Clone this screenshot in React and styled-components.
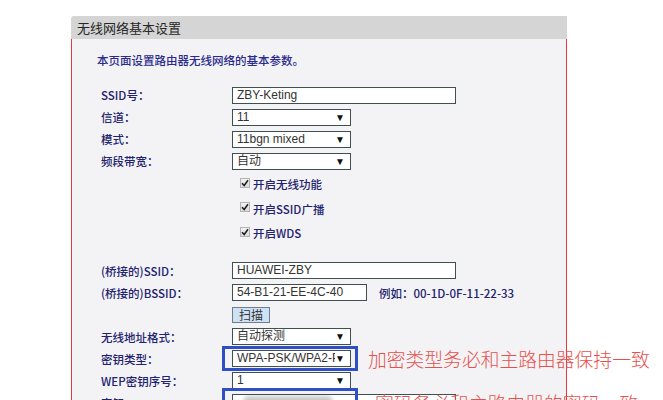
import React from "react";
import styled, { createGlobalStyle } from "styled-components";

const Global = createGlobalStyle`
  html, body { margin: 0; padding: 0; background: #ffffff; overflow: hidden; }
  body { font-family: "Noto Sans CJK SC", "Noto Sans", sans-serif; }
`;

const Page = styled.div`
  padding: 16px 0 0 71px;
  width: 496px;
`;

const Header = styled.div`
  height: 23px;
  line-height: 23px;
  background: #d5d5d5;
  border-radius: 3px 0 0 0;
  padding-left: 6px;
  font-size: 13px;
  color: #262626;
`;

const Body = styled.div`
  background: #f3f3f5;
  border-left: 1px solid #e23a3a;
  border-right: 1px solid #e23a3a;
  padding: 13px 0 20px 25px;
`;

const Desc = styled.div`
  font-size: 11.5px;
  line-height: 16px;
  color: #2a2a8c;
  font-weight: 500;
  margin-bottom: 16px;
`;

const Form = styled.div`
  display: flex;
  flex-direction: column;
  padding-left: 4px;
`;

const Row = styled.div`
  display: flex;
  align-items: center;
  height: ${(p) => p.$h || 22}px;
  margin-top: ${(p) => p.$mt || 0}px;
`;

const Label = styled.div`
  width: 131px;
  flex: none;
  font-size: 11.5px;
  font-weight: 500;
  color: #22226e;
  white-space: nowrap;
`;

const Cell = styled.div`
  position: relative;
  display: flex;
  align-items: center;
  padding-left: ${(p) => p.$pl || 0}px;
`;

const TextBox = styled.div`
  box-sizing: border-box;
  width: ${(p) => p.$w}px;
  height: 17px;
  border: 1px solid #3f5050;
  background: #ffffff;
  font-family: "Liberation Sans", Arial, "Noto Sans CJK SC", sans-serif;
  font-size: 12px;
  line-height: 15px;
  color: #333333;
  padding-left: 4px;
  white-space: nowrap;
  overflow: hidden;
  position: relative;
`;

const Select = styled(TextBox)`
  width: 119px;
  display: flex;
  justify-content: space-between;
  padding-right: 5px;
`;

const Arrow = styled.span`
  font-size: 10px;
  color: #111;
  line-height: 15px;
`;

const SelText = styled.span`
  overflow: hidden;
  white-space: nowrap;
  max-width: 100px;
`;

const CheckRow = styled.div`
  display: flex;
  align-items: center;
  gap: 3px;
  font-size: 11.5px;
  font-weight: 500;
  color: #22226e;
`;

const Box = styled.span`
  box-sizing: border-box;
  width: 10px;
  height: 10px;
  border: 1px solid #b4b4b4;
  background: linear-gradient(#f2f2f2, #dadada);
  display: inline-flex;
  align-items: center;
  justify-content: center;
  margin-top: -3px;
`;

const Example = styled.span`
  margin-left: 12px;
  font-size: 11.5px;
  font-weight: 500;
  color: #22226e;
`;

const ScanButton = styled.div`
  box-sizing: border-box;
  width: 38px;
  height: 16px;
  background: #cfe2f3;
  border: 1px solid #6e7e8e;
  font-size: 12px;
  line-height: 14px;
  color: #333;
  text-align: center;
`;

const Highlight = styled.div`
  position: absolute;
  left: -10px;
  width: 136px;
  top: ${(p) => p.$top}px;
  bottom: ${(p) => p.$bottom}px;
  border: 3px solid #2f4fc2;
  box-sizing: border-box;
  pointer-events: none;
`;

const Note = styled.span`
  margin-left: 17px;
  font-size: 18.8px;
  line-height: 20px;
  color: #e8504c;
  white-space: nowrap;
  font-weight: 300;
`;

const NoteOver = styled(Note)`
  position: absolute;
  left: 143px;
  top: -1px;
  margin-left: 0;
`;

const Blur = styled.span`
  position: absolute;
  left: 10px;
  top: 1px;
  width: 90px;
  height: 12px;
  border-radius: 6px;
  background: #c9c9c9;
  filter: blur(2px);
`;

const Check = () => (
  <svg width="8" height="8" viewBox="0 0 8 8">
    <path d="M1 4.2 L3.2 6.5 L7 1.2" fill="none" stroke="#222" strokeWidth="1.6" />
  </svg>
);

const SelectBox = ({ children }) => (
  <Select $w={119}>
    <SelText>{children}</SelText>
    <Arrow>▼</Arrow>
  </Select>
);

const CheckItem = ({ children }) => (
  <Row $h={24.5}>
    <Label />
    <Cell $pl={8}>
      <CheckRow>
        <Box>
          <Check />
        </Box>
        {children}
      </CheckRow>
    </Cell>
  </Row>
);

export default function App() {
  return (
    <>
      <Global />
      <Page>
        <Header>无线网络基本设置</Header>
        <Body>
          <Desc>本页面设置路由器无线网络的基本参数。</Desc>
          <Form>
            <Row>
              <Label>SSID号：</Label>
              <Cell>
                <TextBox $w={224}>ZBY-Keting</TextBox>
              </Cell>
            </Row>
            <Row>
              <Label>信道：</Label>
              <Cell>
                <SelectBox>11</SelectBox>
              </Cell>
            </Row>
            <Row>
              <Label>模式：</Label>
              <Cell>
                <SelectBox>11bgn mixed</SelectBox>
              </Cell>
            </Row>
            <Row>
              <Label>频段带宽：</Label>
              <Cell>
                <SelectBox>自动</SelectBox>
              </Cell>
            </Row>
            <CheckItem>开启无线功能</CheckItem>
            <CheckItem>开启SSID广播</CheckItem>
            <CheckItem>开启WDS</CheckItem>
            <Row $mt={14}>
              <Label>(桥接的)SSID：</Label>
              <Cell>
                <TextBox $w={224}>HUAWEI-ZBY</TextBox>
              </Cell>
            </Row>
            <Row>
              <Label>(桥接的)BSSID：</Label>
              <Cell>
                <TextBox $w={135}>54-B1-21-EE-4C-40</TextBox>
                <Example>例如：00-1D-0F-11-22-33</Example>
              </Cell>
            </Row>
            <Row>
              <Label />
              <Cell>
                <ScanButton>扫描</ScanButton>
              </Cell>
            </Row>
            <Row>
              <Label>无线地址格式：</Label>
              <Cell>
                <SelectBox>自动探测</SelectBox>
              </Cell>
            </Row>
            <Row>
              <Label>密钥类型：</Label>
              <Cell>
                <SelectBox>WPA-PSK/WPA2-PSK</SelectBox>
                <Highlight $top={-3} $bottom={-2} />
                <Note>加密类型务必和主路由器保持一致</Note>
              </Cell>
            </Row>
            <Row>
              <Label>WEP密钥序号：</Label>
              <Cell>
                <SelectBox>1</SelectBox>
              </Cell>
            </Row>
            <Row>
              <Label>密钥：</Label>
              <Cell>
                <TextBox $w={224}>
                  <Blur />
                </TextBox>
                <Highlight $top={-6} $bottom={-4} />
                <NoteOver>密码务必和主路由器的密码一致</NoteOver>
              </Cell>
            </Row>
          </Form>
        </Body>
      </Page>
    </>
  );
}
